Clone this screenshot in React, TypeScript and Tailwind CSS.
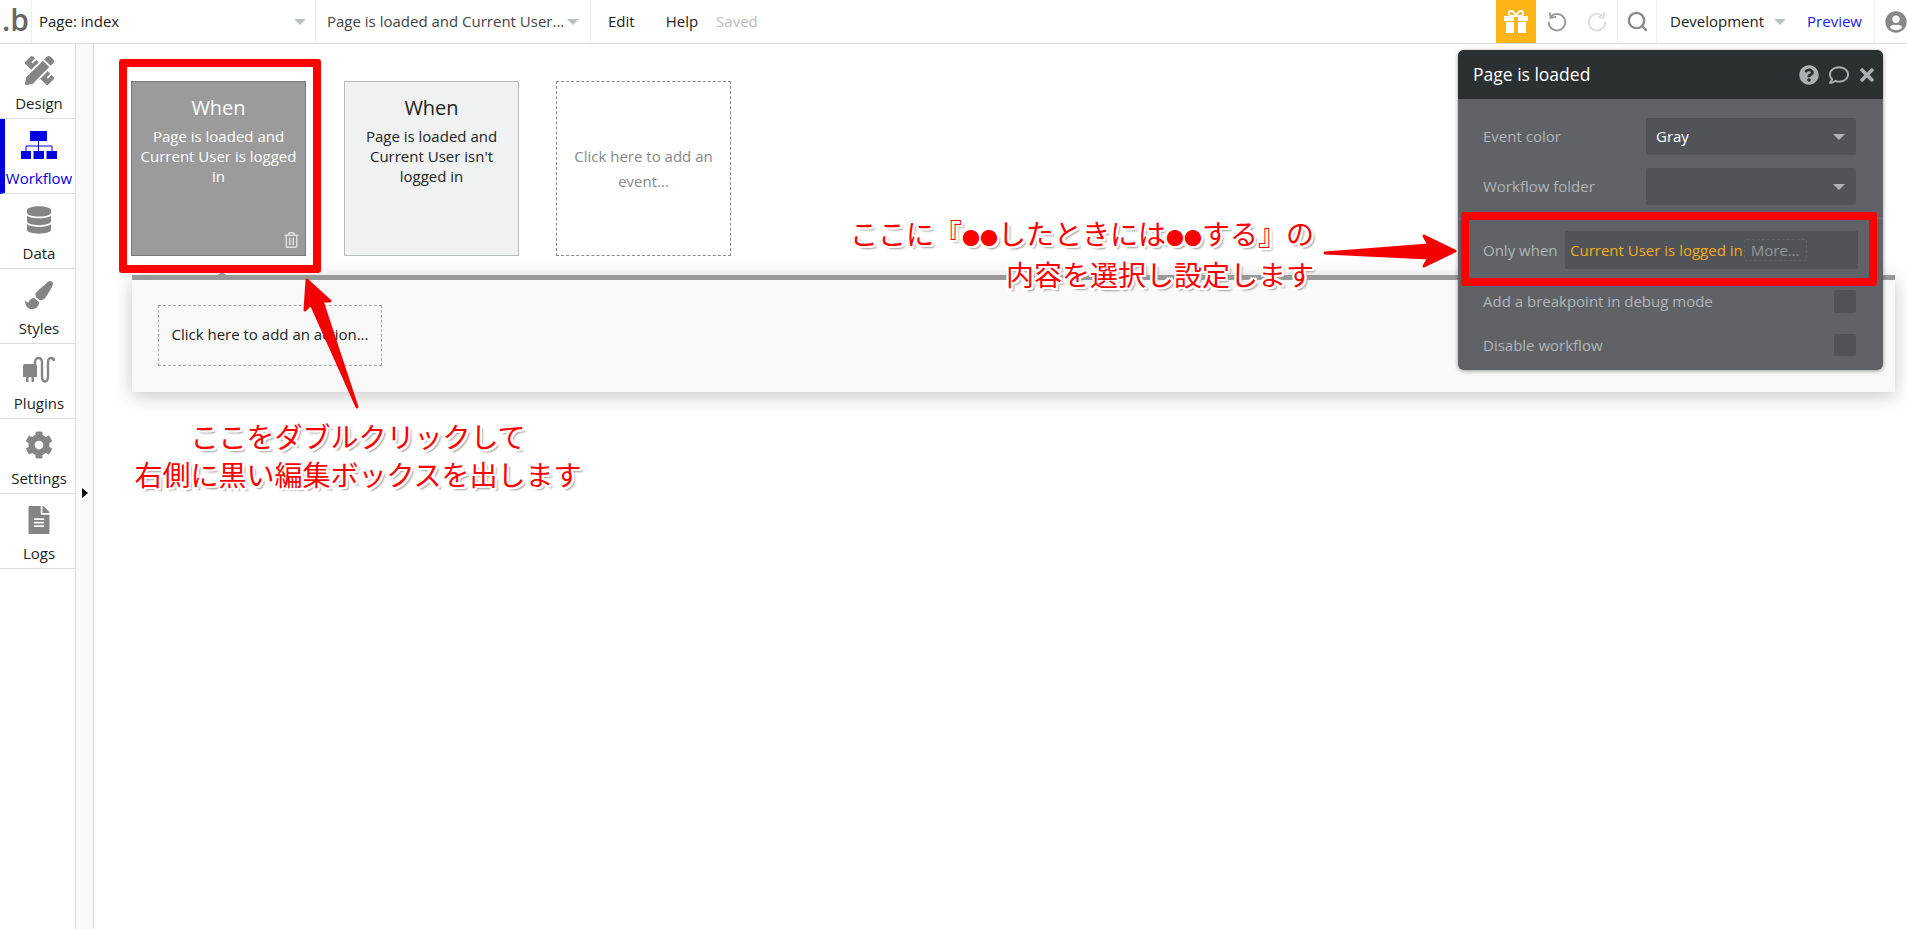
import { Search } from "lucide-react";
import {
  FaPencilRuler,
  FaDatabase,
  FaPaintBrush,
  FaCog,
  FaFileAlt,
  FaQuestionCircle,
  FaRegComment,
  FaTimes,
  FaUserCircle,
  FaRegTrashAlt,
} from "react-icons/fa";

const Caret = ({ className = "border-t-[#b9c0c4]" }: { className?: string }) => (
  <span className={`h-0 w-0 border-x-[6px] border-t-[6px] border-x-transparent ${className}`} />
);

const PlugIcon = () => (
  <svg viewBox="0 0 34 28" className="h-[28px] w-[34px]" fill="#858585">
    <path d="M3 8h10a2 2 0 0 1 2 2v11H1V10a2 2 0 0 1 2-2z" />
    <rect x="4" y="21" width="2.5" height="5" />
    <rect x="9.5" y="21" width="2.5" height="5" />
    <path d="M13 8V6.5Q13 2 16.5 2T20 6.5V20Q20 25.5 23 25.5T26 20V6.5Q26 2 29 2T32 5" fill="none" stroke="#858585" strokeWidth="2.4" />
  </svg>
);

const SitemapIcon = () => (
  <svg viewBox="0 0 36 29" className="h-[29px] w-[36px]" fill="#0000e0">
    <rect x="9" y="0" width="17" height="10" />
    <rect x="0" y="20" width="10" height="8" />
    <rect x="12.5" y="20" width="10.5" height="8" />
    <rect x="25.5" y="20" width="10.5" height="8" />
    <path d="M17.5 10v10M5 20v-5h26v5" fill="none" stroke="#0000e0" strokeWidth="1" />
  </svg>
);

const GiftIcon = () => (
  <svg viewBox="0 0 26 26" className="h-[26px] w-[26px]" fill="#fff">
    <rect x="1" y="7" width="24" height="5" />
    <rect x="3" y="13" width="20" height="11" />
    <rect x="11" y="7" width="4" height="17" fill="#fdb515" />
    <path d="M13 7C11 2 8 1 6.5 2.5S6 7 9 7zM13 7c2-5 5-6 6.5-4.5S20 7 17 7z" fill="none" stroke="#fff" strokeWidth="2" />
  </svg>
);

const UndoIcon = ({ color, flip }: { color: string; flip?: boolean }) => (
  <svg viewBox="0 0 24 24" className={`h-[22px] w-[22px] ${flip ? "-scale-x-100" : ""}`} fill="none">
    <path d="M6 5.5a9 9 0 1 1-3 7" stroke={color} strokeWidth="2" strokeLinecap="round" />
    <path d="M4 1.5l1 6 6-1" stroke={color} strokeWidth="2" />
  </svg>
);

const navItems = [
  { label: "Design", icon: <FaPencilRuler className="h-[29px] w-[29px]" /> },
  { label: "Workflow", icon: <SitemapIcon />, active: true },
  { label: "Data", icon: <FaDatabase className="h-[28px] w-[24px]" /> },
  { label: "Styles", icon: <FaPaintBrush className="h-[28px] w-[28px]" /> },
  { label: "Plugins", icon: <PlugIcon /> },
  { label: "Settings", icon: <FaCog className="h-[28px] w-[28px]" /> },
  { label: "Logs", icon: <FaFileAlt className="h-[28px] w-[22px]" /> },
];

const outline =
  "[text-shadow:2px_0_0_#fff,-2px_0_0_#fff,0_2px_0_#fff,0_-2px_0_#fff,2px_2px_0_#fff,-2px_2px_0_#fff,2px_-2px_0_#fff,-2px_-2px_0_#fff,3px_3px_2px_#999]";

const App = () => {
  return (
    <div className="relative flex h-screen w-full flex-col overflow-hidden bg-white font-['Open_Sans','Noto_Sans_CJK_JP',sans-serif] text-[15px] text-[#222]">
      {/* Top bar */}
      <header className="flex h-[44px] shrink-0 border-b border-[#dcdcdc]">
        <div className="flex w-[32px] items-center justify-center border-r border-[#eee] text-[30px] leading-none font-semibold text-[#666]">
          <span className="-mt-[3px]">.b</span>
        </div>
        <div className="flex w-[284px] items-center justify-between border-r border-[#eee] pr-[9px] pl-[7px]">
          <span>Page: index</span>
          <Caret />
        </div>
        <div className="flex w-[275px] items-center justify-between border-r border-[#eee] pr-[11px] pl-[11px] text-[#444]">
          <span className="whitespace-nowrap">Page is loaded and Current User...</span>
          <Caret />
        </div>
        <div className="flex items-center pl-[17px]">Edit</div>
        <div className="flex items-center pl-[31px]">Help</div>
        <div className="flex items-center pl-[18px] text-[#bbb]">Saved</div>
        <div className="ml-auto flex">
          <div className="flex w-[40px] items-center justify-center bg-[#fdb515] text-white">
            <GiftIcon />
          </div>
          <div className="flex w-[82px] items-center border-r border-[#eee] pl-[10px]">
            <UndoIcon color="#999" />
            <span className="ml-[18px]">
              <UndoIcon color="#ddd" flip />
            </span>
          </div>
          <div className="flex w-[39px] items-center justify-center border-r border-[#eee] text-[#888]">
            <Search className="h-[23px] w-[23px]" strokeWidth={2.4} />
          </div>
          <div className="flex w-[218px] items-center border-r border-[#eee] pl-[13px]">
            <span>Development</span>
            <span className="ml-[10px] flex">
              <Caret />
            </span>
            <span className="ml-[21px] text-[#1a1aee]">Preview</span>
          </div>
          <div className="flex w-[32px] items-center pl-[10px] text-[#888]">
            <FaUserCircle className="h-[22px] w-[22px] shrink-0" />
          </div>
        </div>
      </header>

      <div className="flex min-h-0 flex-1">
        {/* Sidebar */}
        <nav className="w-[76px] shrink-0 border-r border-[#ddd]">
          {navItems.map((item) => (
            <div
              key={item.label}
              className={`flex h-[75px] flex-col items-center justify-end border-b border-[#ddd] pb-[5px] ${
                item.active ? "border-l-[5px] border-l-[#0000e0] pr-[2px] text-[#0000e0]" : "pl-[3px] text-[#222]"
              }`}
            >
              <div className={`flex h-[38px] items-center ${item.active ? "" : "text-[#858585]"}`}>{item.icon}</div>
              <span className="mt-[4px] leading-[20px]">{item.label}</span>
            </div>
          ))}
        </nav>

        {/* Gutter */}
        <div className="relative w-[18px] shrink-0 border-r border-[#ddd] bg-[#f9f9f9]">
          <span className="absolute top-[444px] left-[6px] h-0 w-0 border-y-[5px] border-l-[6px] border-y-transparent border-l-black" />
        </div>

        {/* Workflow canvas */}
        <main className="min-w-0 flex-1 pt-[37px]">
          <div className="flex gap-[38px] pl-[37px]">
            <div className="relative flex h-[175px] w-[175px] flex-col items-center border border-[#777] bg-[#9b9b9b] px-[6px] pt-[13px] text-center text-white">
              <div className="text-[20px] leading-[26px]">When</div>
              <div className="mt-[5px] leading-[20px]">Page is loaded and Current User is logged in</div>
              <FaRegTrashAlt className="absolute right-[6px] bottom-[7px] h-[16px] w-[15px] text-[#ddd]" />
            </div>
            <div className="flex h-[175px] w-[175px] flex-col items-center border border-[#b5bcbc] bg-[#f0f2f1] px-[6px] pt-[13px] text-center">
              <div className="text-[20px] leading-[26px]">When</div>
              <div className="mt-[5px] leading-[20px]">Page is loaded and Current User isn't logged in</div>
            </div>
            <div className="-ml-[1px] flex h-[175px] w-[175px] items-center justify-center border border-dashed border-[#888] px-[12px] text-center leading-[25px] text-[#888]">
              Click here to add an event...
            </div>
          </div>

          <section className="relative mt-[19px] mr-[12px] ml-[38px] h-[117px] border-t-[5px] border-[#999] bg-[#f9f9f9] pt-[25px] pl-[26px] shadow-[0_4px_18px_rgba(0,0,0,0.22)]">
            <span className="absolute -top-[8px] left-[84px] h-0 w-0 border-x-[6px] border-b-[4px] border-x-transparent border-b-[#999]" />
            <div className="flex h-[61px] w-[224px] items-center justify-center border border-dashed border-[#aaa] pb-[2px] whitespace-nowrap">
              Click here to add an action...
            </div>
          </section>
        </main>
      </div>

      {/* Floating property editor */}
      <aside className="absolute top-[50px] left-[1458px] w-[425px] overflow-hidden rounded-[6px] bg-[#5f6367] shadow-[0_1px_4px_rgba(0,0,0,0.4)]">
        <div className="flex h-[49px] items-center justify-between bg-[#2b3133] pr-[8px] pl-[15px] text-[#888]">
          <span className="text-[17.5px] text-white">Page is loaded</span>
          <div className="flex items-center gap-[8px] text-[#aab0b3]">
            <FaQuestionCircle className="h-[20px] w-[20px]" />
            <FaRegComment className="h-[20px] w-[24px]" />
            <FaTimes className="h-[20px] w-[16px]" />
          </div>
        </div>
        <div className="pt-[19px] pr-[27px] pb-[13px] pl-[25px] text-[#b0b4b7]">
          <div className="flex items-center justify-between">
            <span>Event color</span>
            <div className="flex h-[37px] w-[210px] items-center justify-between rounded-[2px] bg-[#505458] pr-[11px] pl-[10px] text-white">
              <span>Gray</span>
              <Caret className="border-t-[#b0b4b7]" />
            </div>
          </div>
          <div className="mt-[13px] flex items-center justify-between">
            <span>Workflow folder</span>
            <div className="flex h-[37px] w-[210px] items-center justify-end rounded-[2px] bg-[#505458] pr-[11px]">
              <Caret className="border-t-[#b0b4b7]" />
            </div>
          </div>
          <div className="-mr-[27px] -ml-[25px] mt-[13px] h-px bg-[#6d7175]" />
          <div className="mt-[12px] flex items-center justify-between">
            <span>Only when</span>
            <div className="-mr-[2px] flex h-[38px] w-[293px] items-center rounded-[2px] bg-[#505458] pl-[5px]">
              <span className="whitespace-nowrap text-[#f0a91e]">Current User is logged in</span>
              <span className="ml-[1px] rounded-[3px] border border-dashed border-[#5e6266] px-[6px] leading-[20px] text-[#909498]">More...</span>
            </div>
          </div>
          <div className="mt-[21px] flex items-center justify-between">
            <span>Add a breakpoint in debug mode</span>
            <div className="h-[23px] w-[22px] rounded-[2px] bg-[#505458]" />
          </div>
          <div className="mt-[21px] flex items-center justify-between">
            <span>Disable workflow</span>
            <div className="h-[22px] w-[22px] rounded-[2px] bg-[#505458]" />
          </div>
        </div>
      </aside>

      {/* Red annotation frames */}
      <div className="absolute top-[59px] left-[119px] h-[214px] w-[202px] rounded-[3px] border-[8px] border-[#ff0000]" />
      <div className="absolute top-[212px] left-[1461px] h-[74px] w-[416px] rounded-[3px] border-[8px] border-[#ff0000]" />

      {/* Annotation arrows */}
      <svg className="pointer-events-none absolute top-0 left-0 h-[929px] w-[1907px]" viewBox="0 0 1907 929">
        <path d="M357 407L322 301L330 301L307 280L305 310L311 304Z" fill="#f40000" stroke="#f40000" strokeWidth="3" strokeLinejoin="round" />
        <path d="M1325 253L1429 245L1424 236L1455 251L1424 266L1429 258Z" fill="#f40000" stroke="#f40000" strokeWidth="3" strokeLinejoin="round" />
      </svg>

      {/* Annotation captions */}
      <div className={`absolute top-[418px] left-[120px] w-[476px] text-center text-[28px] leading-[38px] text-[#ff0000] ${outline}`}>
        <div>ここをダブルクリックして</div>
        <div>右側に黒い編集ボックスを出します</div>
      </div>
      <div className={`absolute top-[216px] left-[840px] w-[474px] text-right text-[28px] leading-[37px] text-[#ff0000] ${outline}`}>
        <div className="whitespace-nowrap">
          ここに『<span className="text-[18px]">●●</span>したときには<span className="text-[18px]">●●</span>する』の
        </div>
        <div>内容を選択し設定します</div>
      </div>
    </div>
  );
};

export default App;
